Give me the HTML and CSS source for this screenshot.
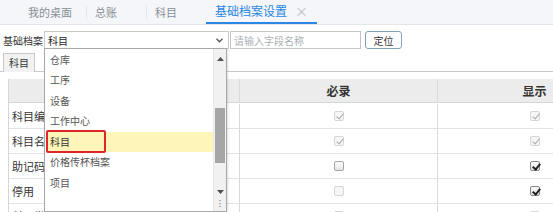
FILE: index.html
```html
<!DOCTYPE html>
<html lang="zh">
<head>
<meta charset="utf-8">
<link rel="stylesheet" href="styles.css">
</head>
<body>
<div class="page">
  <div class="tabbar">
    <div class="tab">我的桌面</div>
    <div class="tab">总账</div>
    <div class="tab">科目</div>
    <div class="tab active">基础档案设置<span class="close">×</span></div>
  </div>
  <div class="toolbar">
    <span class="label">基础档案</span>
    <div class="select"><span class="sel-text">科目</span>
      <svg class="sel-arrow" width="7" height="5" viewBox="0 0 7 5"><path d="M0.5 0.8 L3.5 3.8 L6.5 0.8" fill="none" stroke="#555" stroke-width="1.3"/></svg>
    </div>
    <div class="search"><span class="placeholder">请输入字段名称</span></div>
    <div class="btn">定位</div>
  </div>
  <div class="subtabs"><div class="subtab">科目</div></div>
  <div class="panel">
    <div class="grid">
      <div class="cell head"></div>
      <div class="cell head">必录</div>
      <div class="cell head">显示</div>

      <div class="cell label-cell">科目编码</div>
      <div class="cell"><span class="cb dis checked"></span></div>
      <div class="cell"><span class="cb dis checked"></span></div>

      <div class="cell label-cell">科目名称</div>
      <div class="cell"><span class="cb dis checked"></span></div>
      <div class="cell"><span class="cb dis checked"></span></div>

      <div class="cell label-cell">助记码</div>
      <div class="cell"><span class="cb"></span></div>
      <div class="cell"><span class="cb on checked"></span></div>

      <div class="cell label-cell">停用</div>
      <div class="cell"><span class="cb dis"></span></div>
      <div class="cell"><span class="cb on checked"></span></div>

      <div class="cell label-cell">科目类型</div>
      <div class="cell"><span class="cb dis"></span></div>
      <div class="cell"><span class="cb dis"></span></div>
    </div>
  </div>

  <div class="dropdown">
    <div class="list">
      <div class="item">仓库</div>
      <div class="item">工序</div>
      <div class="item">设备</div>
      <div class="item">工作中心</div>
      <div class="item selected">科目<span class="mark"></span></div>
      <div class="item">价格传杯档案</div>
      <div class="item">项目</div>
    </div>
    <div class="scrollbar">
      <svg class="arr" width="7" height="4" viewBox="0 0 7 4"><path d="M0 4 L3.5 0 L7 4 Z" fill="#505050"/></svg>
      <div class="track"><div class="thumb"></div></div>
      <svg class="arr" width="7" height="4" viewBox="0 0 7 4"><path d="M0 0 L3.5 4 L7 0 Z" fill="#505050"/></svg>
      <div class="grip">⁝</div>
    </div>
  </div>
</div>
</body>
</html>
```

FILE: styles.css
```css
* { box-sizing: border-box; }
html, body { margin: 0; padding: 0; background: #fff; }
body {
  font-family: "Noto Sans CJK SC", "Noto Sans", sans-serif;
  color: #333;
  width: 553px;
  height: 212px;
  overflow: hidden;
}
.page { position: relative; width: 553px; height: 212px; overflow: hidden; }

.tabbar {
  height: 25px;
  background: #f4f6f9;
  border-bottom: 1px solid #e3e7ed;
  display: flex;
  align-items: stretch;
  padding-left: 19px;
}
.tab {
  min-width: 60px;
  padding: 0 14px 0 9px;
  font-size: 11px;
  line-height: 24px;
  color: #8a8f96;
  position: relative;
  white-space: nowrap;
}
.tab + .tab::before {
  content: "";
  position: absolute;
  left: 0;
  top: 6px;
  height: 13px;
  border-left: 1px solid #e3e6ea;
}
.tab.active {
  color: #2b87e3;
  font-size: 12px;
  padding-right: 9px;
  border-bottom: 2px solid #2b87e3;
  line-height: 22px;
  height: 24px;
}
.tab.active::before { display: none; }
.close {
  color: #b8bcc2;
  font-size: 13px;
  margin-left: 8px;
}

.toolbar {
  display: flex;
  align-items: center;
  height: 18px;
  margin-top: 6px;
  padding-left: 3px;
}
.label { font-size: 10px; color: #333; width: 41px; white-space: nowrap; }
.select {
  width: 185px;
  height: 18px;
  border: 1px solid #c9c9c9;
  display: flex;
  align-items: center;
  justify-content: space-between;
  padding: 0 5px 0 3px;
  background: #fff;
}
.sel-text { font-size: 10px; color: #222; }
.search {
  width: 131px;
  height: 18px;
  border: 1px solid #c6c6c6;
  margin-left: 1px;
  display: flex;
  align-items: center;
  padding-left: 3px;
}
.placeholder { font-size: 10px; color: #aab0b6; }
.btn {
  margin-left: 4px;
  width: 37px;
  height: 18px;
  border: 1px solid #7fa3b8;
  border-radius: 3px;
  font-size: 10px;
  color: #333;
  display: flex;
  align-items: center;
  justify-content: center;
  background: #fff;
}

.subtabs { display: flex; margin-top: 4px; padding-left: 3px; height: 18px; }
.subtab {
  width: 32px;
  height: 19px;
  border: 1px solid #c8c8c8;
  border-bottom: none;
  background: #f2f2f2;
  font-size: 10px;
  line-height: 17px;
  text-align: center;
  color: #333;
  position: relative;
  z-index: 1;
}
.panel {
  border-top: 1px solid #c8c8c8;
  padding: 7px 0 0 8px;
}
.grid {
  display: grid;
  grid-template-columns: 231px 198px 194px;
  grid-auto-rows: 25px;
  border-left: 1px solid #d6d6d6;
  width: 700px;
}
.cell {
  border-right: 1px solid #d9d9d9;
  border-bottom: 1px solid #e2e2e2;
  display: flex;
  align-items: center;
  justify-content: center;
}
.cell.head {
  background: #ececec;
  font-size: 12px;
  font-weight: bold;
  color: #333;
  height: 24px;
  border-bottom: 1px solid #d6d6d6;
}
.grid .cell.head { align-self: start; }
.label-cell {
  justify-content: flex-start;
  padding-left: 3px;
  font-size: 11px;
  color: #333;
  white-space: nowrap;
  overflow: hidden;
}

.cb {
  width: 10px;
  height: 10px;
  border: 1px solid #a5a5a5;
  border-radius: 2px;
  background: linear-gradient(#fcfcfc, #e6e6e6);
  position: relative;
  display: block;
}
.cb.dis { border-color: #d6d6d6; background: #f6f6f6; }
.cb.checked::after {
  content: "";
  position: absolute;
  left: 3px;
  top: 0px;
  width: 3px;
  height: 6px;
  border-right: 1.6px solid #a9a9a9;
  border-bottom: 1.6px solid #a9a9a9;
  transform: rotate(40deg);
}
.cb.on { border-color: #8a8a8a; background: linear-gradient(#fafafa, #e2e2e2); }
.cb.on.checked::after { border-color: #222; border-width: 0 2px 2px 0; }

.dropdown {
  position: absolute;
  left: 44px;
  top: 48px;
  width: 183px;
  height: 164px;
  border: 1px solid #a8a8a8;
  background: #fff;
  display: flex;
  box-shadow: 1px 1px 2px rgba(0,0,0,0.12);
}
.list { flex: 1; padding-top: 0.5px; }
.item {
  height: 20.5px;
  line-height: 20.5px;
  font-size: 10px;
  color: #555;
  padding-left: 5px;
  position: relative;
}
.item.selected {
  background: #fdf6b8;
  color: #333;
  margin-left: 1px;
  padding-left: 4px;
}
.mark {
  position: absolute;
  left: 0;
  top: -2px;
  width: 60px;
  height: 23px;
  border: 2px solid #e0262a;
  border-radius: 2px;
}
.scrollbar {
  width: 13px;
  background: #f1f1f1;
  border-left: 1px solid #e8e8e8;
  display: flex;
  flex-direction: column;
  align-items: center;
}
.arr { margin-top: 8px; flex: none; }
.track { height: 128px; width: 100%; position: relative; }
.thumb {
  position: absolute;
  left: 1px;
  right: 1px;
  top: 47px;
  height: 55px;
  background: #a6a6a6;
}
.scrollbar .arr:nth-of-type(2) { margin-top: 1px; }
.grip { font-size: 9px; color: #555; line-height: 10px; margin-top: 5px; }
```
